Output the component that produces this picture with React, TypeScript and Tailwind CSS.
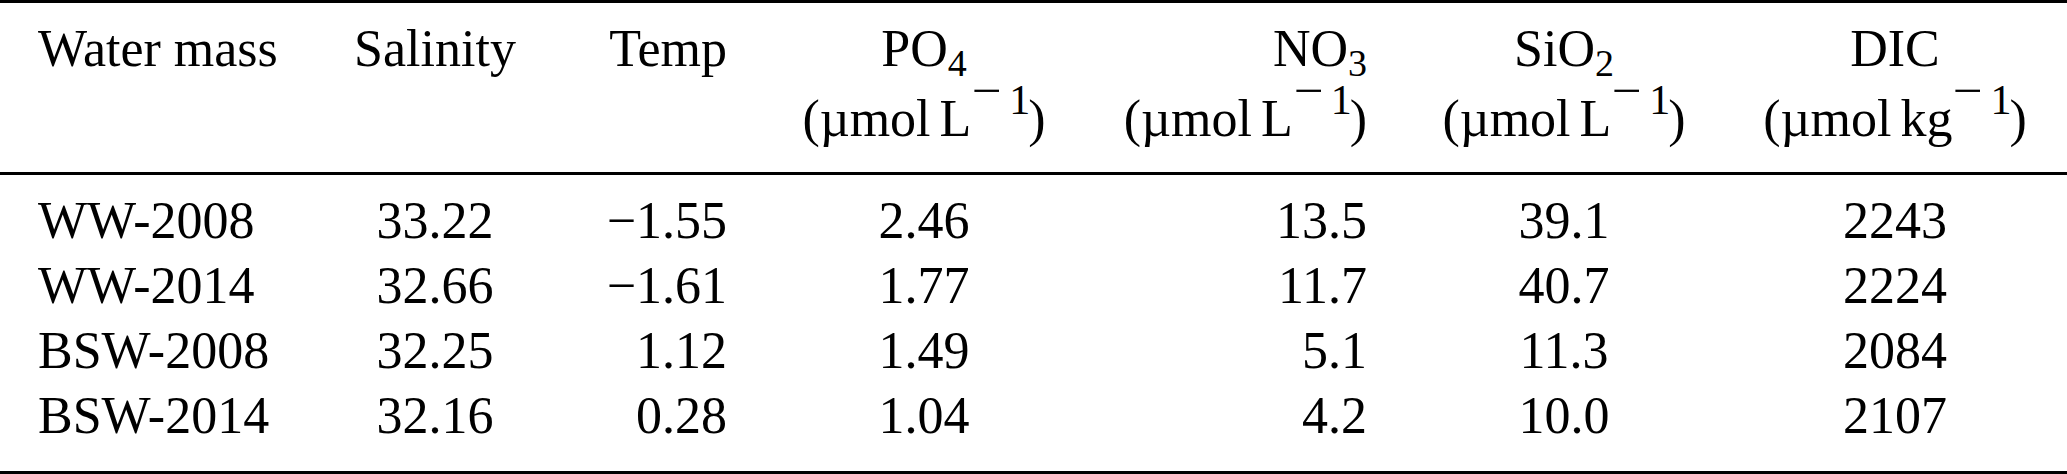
import React from 'react';

type Align = 'left' | 'center' | 'right';

const cols = 'grid grid-cols-[319px_232px_214px_318px_322px_318px_344px]';

// per-column alignment, LaTeX style (l c r c r c c)
const align: Align[] = ['left', 'center', 'right', 'center', 'right', 'center', 'center'];

const cellClass = (a: Align) => {
  if (a === 'left') return 'text-left pl-[38px]';
  if (a === 'right') return 'text-right pr-[38px]';
  return 'text-center';
};

const rows: string[][] = [
  ['WW-2008', '33.22', '\u22121.55', '2.46', '13.5', '39.1', '2243'],
  ['WW-2014', '32.66', '\u22121.61', '1.77', '11.7', '40.7', '2224'],
  ['BSW-2008', '32.25', '1.12', '1.49', '5.1', '11.3', '2084'],
  ['BSW-2014', '32.16', '0.28', '1.04', '4.2', '10.0', '2107'],
];

const Sub: React.FC<{ children: React.ReactNode }> = ({ children }) => (
  <span className="text-[38px] leading-[0px] align-[-10px]">{children}</span>
);

const Unit: React.FC<{ u: string }> = ({ u }) => (
  <span>
    (µmol<span className="inline-block w-[9px]" />
    {u}
    <span className="text-[42px] leading-[0px] align-[22px] pl-[1px]">
      <span className="inline-block leading-[0px] text-[46px] align-[8px] mr-[11px] scale-x-[1.15] origin-left">
        {'\u2212'}
      </span>
      1
    </span>
    <span className="ml-[-2px]">)</span>
  </span>
);

const header: { top: React.ReactNode; unit?: string }[] = [
  { top: 'Water mass' },
  { top: 'Salinity' },
  { top: 'Temp' },
  { top: <>PO<Sub>4</Sub></>, unit: 'L' },
  { top: <>NO<Sub>3</Sub></>, unit: 'L' },
  { top: <>SiO<Sub>2</Sub></>, unit: 'L' },
  { top: 'DIC', unit: 'kg' },
];

const App: React.FC = () => {
  return (
    <div className="w-[2067px] h-[474px] bg-white text-black font-['Liberation_Serif',serif] text-[52px] overflow-hidden">
      {/* top rule */}
      <div className="h-[3px] bg-black" />

      {/* header */}
      <div className={`${cols} h-[169px] pt-[11px] leading-[70px]`}>
        {header.map((h, i) => (
          <div key={i} className={cellClass(align[i])}>
            <div>{h.top}</div>
            {h.unit && (
              <div>
                <Unit u={h.unit} />
              </div>
            )}
          </div>
        ))}
      </div>

      {/* mid rule */}
      <div className="h-[3px] bg-black" />

      {/* body */}
      <div className="h-[296px] pt-[13px] leading-[65px]">
        {rows.map((r, ri) => (
          <div key={ri} className={cols}>
            {r.map((v, ci) => (
              <div key={ci} className={cellClass(align[ci])}>
                {v}
              </div>
            ))}
          </div>
        ))}
      </div>

      {/* bottom rule */}
      <div className="h-[3px] bg-black" />
    </div>
  );
};

export default App;
